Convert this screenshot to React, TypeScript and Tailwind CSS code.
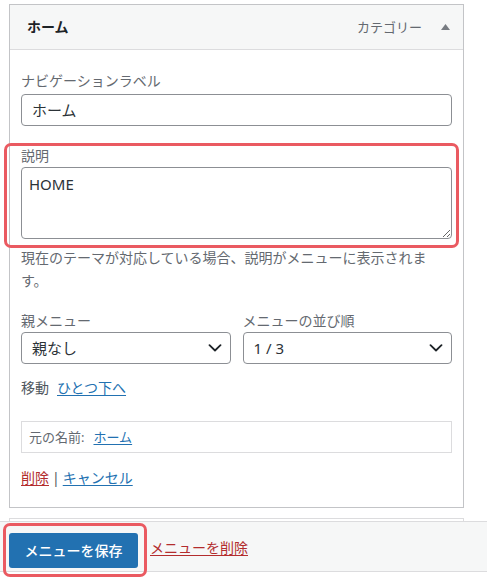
import React from "react";

const font = "font-['Noto_Sans','Noto_Sans_CJK_JP',sans-serif]";

function Chevron() {
    return (
        <svg width="14" height="8" viewBox="0 0 14 8" fill="none">
            <path d="M1.5 1.2L7 6.5l5.5-5.3" stroke="#1d2327" strokeWidth="1.8" strokeLinecap="round" strokeLinejoin="round" />
        </svg>
    );
}

function FakeSelect({ value }: { value: string }) {
    return (
        <div className="mt-[1px] flex h-[32px] items-center justify-between rounded-[4px] border border-[#8c8f94] bg-white pl-[10px] pr-[8px] text-[15px] text-[#2c3338]">
            <span>{value}</span>
            <Chevron />
        </div>
    );
}

export default function App() {
    return (
        <div className={`relative h-[579px] w-[487px] overflow-hidden bg-white text-[14px] leading-[20px] ${font}`}>
            <div className="w-[464px] pl-[9px] pt-1">
                {/* Menu item card */}
                <div className="border border-[#c3c4c7]">
                    <div className="flex h-[45px] items-center justify-between border-b border-[#dcdcde] bg-[#f6f7f7] pl-[17px] pr-[13px]">
                        <span className="font-bold text-[#1d2327]">ホーム</span>
                        <div className="flex items-center gap-[19px]">
                            <span className="text-[13px] text-[#646970]">カテゴリー</span>
                            <svg width="9" height="6" viewBox="0 0 9 6">
                                <path d="M4.5 0L9 6H0z" fill="#787c82" />
                            </svg>
                        </div>
                    </div>

                    <div className="px-[11px] pb-[19px] pt-[21px]">
                        <label className="block text-[#646970]">ナビゲーションラベル</label>
                        <div className="mt-[3px] flex h-[32px] items-center rounded-[4px] border border-[#8c8f94] px-[10px] text-[15px] text-[#2c3338]">
                            ホーム
                        </div>

                        <div className="relative mt-[20px]">
                            <label className="block text-[#646970]">説明</label>
                            <textarea
                                readOnly
                                defaultValue="HOME"
                                className="mt-[1px] block h-[72px] w-full rounded-[4px] border border-[#8c8f94] px-[7px] pt-[5px] text-[15px] leading-[22px] text-[#2c3338] outline-none"
                            />
                            <span className="pointer-events-none absolute -bottom-[9px] -left-[17px] -right-[7px] -top-[3px] rounded-[7px] border-[3px] border-[#ea5a61]" />
                        </div>

                        <p className="mt-[7px] leading-[23px] text-[#646970]">
                            現在のテーマが対応している場合、説明がメニューに表示されます。
                        </p>

                        <div className="mt-[19px] grid grid-cols-2 gap-x-3">
                            <div>
                                <label className="block text-[#646970]">親メニュー</label>
                                <FakeSelect value="親なし" />
                            </div>
                            <div>
                                <label className="block text-[#646970]">メニューの並び順</label>
                                <FakeSelect value="1 / 3" />
                            </div>
                        </div>

                        <div className="mt-[14px] flex gap-2">
                            <span className="text-[#50575e]">移動</span>
                            <a className="text-[#2271b1] underline underline-offset-2">ひとつ下へ</a>
                        </div>

                        <div className="mt-[23px] flex h-[32px] items-center gap-[9px] border border-[#dcdcde] px-[7px] text-[13px]">
                            <span className="text-[#646970]">元の名前:</span>
                            <a className="text-[#2271b1] underline underline-offset-2">ホーム</a>
                        </div>

                        <div className="mt-[15px] flex items-center gap-[3px]">
                            <a className="text-[#b32d2e] underline underline-offset-2">削除</a>
                            <span className="text-[#50575e]">|</span>
                            <a className="text-[#2271b1] underline underline-offset-2">キャンセル</a>
                        </div>
                    </div>
                </div>

                {/* next card peeking under the footer */}
                <div className="mt-[10px] h-[3px] border-x border-t border-[#dcdcde]" />
            </div>

            {/* Footer */}
            <div className="flex h-[51px] items-start border-b border-t border-[#dcdcde] bg-[#f6f7f7] pl-[9px] pt-[11px]">
                <div className="relative">
                    <button className="flex h-[35px] w-[129px] items-center justify-center rounded-[3px] bg-[#2271b1] text-[14px] font-medium text-white">
                        メニューを保存
                    </button>
                    <span className="pointer-events-none absolute -bottom-[9px] -left-[6px] -right-[9px] -top-[10px] rounded-[7px] border-[3px] border-[#ea5a61]" />
                </div>
                <a className="ml-[12px] mt-[5px] text-[#b32d2e] underline underline-offset-2">メニューを削除</a>
            </div>
        </div>
    );
}
